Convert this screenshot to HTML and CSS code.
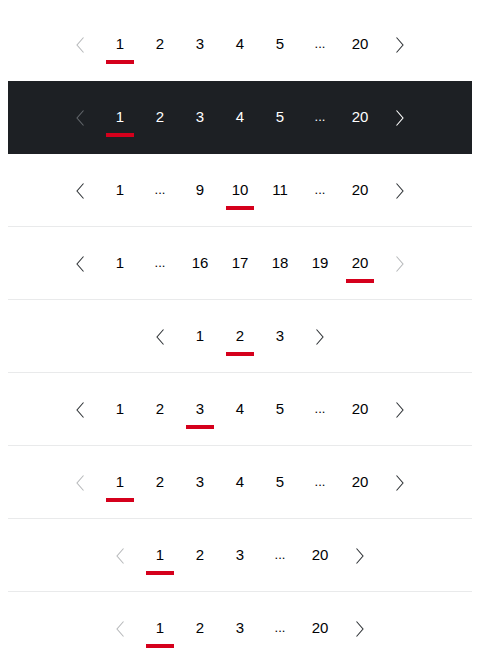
FILE: index.html
```html
<!DOCTYPE html>
<html>
<head>
<meta charset="utf-8">
<link rel="stylesheet" href="styles.css">
</head>
<body>
<div class="list">
  <nav class="pager">
    <span class="arrow disabled"><svg viewBox="0 0 8 16" width="8" height="16"><path d="M7.5 0.5 L1 8 L7.5 15.5"/></svg></span>
    <span class="item current">1</span><span class="item">2</span><span class="item">3</span><span class="item">4</span><span class="item">5</span><span class="item dots">...</span><span class="item">20</span>
    <span class="arrow"><svg viewBox="0 0 8 16" width="8" height="16"><path d="M0.5 0.5 L7 8 L0.5 15.5"/></svg></span>
  </nav>
  <nav class="pager dark">
    <span class="arrow disabled"><svg viewBox="0 0 8 16" width="8" height="16"><path d="M7.5 0.5 L1 8 L7.5 15.5"/></svg></span>
    <span class="item current">1</span><span class="item">2</span><span class="item">3</span><span class="item">4</span><span class="item">5</span><span class="item dots">...</span><span class="item">20</span>
    <span class="arrow"><svg viewBox="0 0 8 16" width="8" height="16"><path d="M0.5 0.5 L7 8 L0.5 15.5"/></svg></span>
  </nav>
  <nav class="pager">
    <span class="arrow"><svg viewBox="0 0 8 16" width="8" height="16"><path d="M7.5 0.5 L1 8 L7.5 15.5"/></svg></span>
    <span class="item">1</span><span class="item dots">...</span><span class="item">9</span><span class="item current">10</span><span class="item">11</span><span class="item dots">...</span><span class="item">20</span>
    <span class="arrow"><svg viewBox="0 0 8 16" width="8" height="16"><path d="M0.5 0.5 L7 8 L0.5 15.5"/></svg></span>
  </nav>
  <nav class="pager">
    <span class="arrow"><svg viewBox="0 0 8 16" width="8" height="16"><path d="M7.5 0.5 L1 8 L7.5 15.5"/></svg></span>
    <span class="item">1</span><span class="item dots">...</span><span class="item">16</span><span class="item">17</span><span class="item">18</span><span class="item">19</span><span class="item current">20</span>
    <span class="arrow disabled"><svg viewBox="0 0 8 16" width="8" height="16"><path d="M0.5 0.5 L7 8 L0.5 15.5"/></svg></span>
  </nav>
  <nav class="pager">
    <span class="arrow"><svg viewBox="0 0 8 16" width="8" height="16"><path d="M7.5 0.5 L1 8 L7.5 15.5"/></svg></span>
    <span class="item">1</span><span class="item current">2</span><span class="item">3</span>
    <span class="arrow"><svg viewBox="0 0 8 16" width="8" height="16"><path d="M0.5 0.5 L7 8 L0.5 15.5"/></svg></span>
  </nav>
  <nav class="pager">
    <span class="arrow"><svg viewBox="0 0 8 16" width="8" height="16"><path d="M7.5 0.5 L1 8 L7.5 15.5"/></svg></span>
    <span class="item">1</span><span class="item">2</span><span class="item current">3</span><span class="item">4</span><span class="item">5</span><span class="item dots">...</span><span class="item">20</span>
    <span class="arrow"><svg viewBox="0 0 8 16" width="8" height="16"><path d="M0.5 0.5 L7 8 L0.5 15.5"/></svg></span>
  </nav>
  <nav class="pager">
    <span class="arrow disabled"><svg viewBox="0 0 8 16" width="8" height="16"><path d="M7.5 0.5 L1 8 L7.5 15.5"/></svg></span>
    <span class="item current">1</span><span class="item">2</span><span class="item">3</span><span class="item">4</span><span class="item">5</span><span class="item dots">...</span><span class="item">20</span>
    <span class="arrow"><svg viewBox="0 0 8 16" width="8" height="16"><path d="M0.5 0.5 L7 8 L0.5 15.5"/></svg></span>
  </nav>
  <nav class="pager">
    <span class="arrow disabled"><svg viewBox="0 0 8 16" width="8" height="16"><path d="M7.5 0.5 L1 8 L7.5 15.5"/></svg></span>
    <span class="item current">1</span><span class="item">2</span><span class="item">3</span><span class="item dots">...</span><span class="item">20</span>
    <span class="arrow"><svg viewBox="0 0 8 16" width="8" height="16"><path d="M0.5 0.5 L7 8 L0.5 15.5"/></svg></span>
  </nav>
  <nav class="pager">
    <span class="arrow disabled"><svg viewBox="0 0 8 16" width="8" height="16"><path d="M7.5 0.5 L1 8 L7.5 15.5"/></svg></span>
    <span class="item current">1</span><span class="item">2</span><span class="item">3</span><span class="item dots">...</span><span class="item">20</span>
    <span class="arrow"><svg viewBox="0 0 8 16" width="8" height="16"><path d="M0.5 0.5 L7 8 L0.5 15.5"/></svg></span>
  </nav>
</div>
</body>
</html>
```
FILE: styles.css
```css
html, body {
  margin: 0;
  padding: 0;
  background: #fff;
}
body {
  padding: 8px;
  font-family: "Liberation Sans", Arial, sans-serif;
  font-size: 15px;
  color: #010205;
}
.list {
  display: flex;
  flex-direction: column;
}
.pager {
  display: flex;
  justify-content: center;
  align-items: flex-start;
  height: 72px;
  box-sizing: content-box;
  padding: 0;
  border-bottom: 1px solid #e9eaeb;
}
.pager:first-child {
  border-bottom-color: #fff;
}
.pager:last-child {
  border-bottom-color: #fff;
}
.pager.dark {
  background: #1d2024;
  color: #fff;
  border-bottom-color: #1d2024;
}
.item {
  width: 40px;
  margin-top: 24px;
  height: 32px;
  line-height: 24px;
  text-align: center;
  position: relative;
}
.item.dots {
  font-size: 13px;
}
.item.current::after {
  content: "";
  position: absolute;
  left: 6px;
  right: 6px;
  bottom: 0;
  height: 4px;
  background: #d5001c;
}
.arrow {
  width: 40px;
  height: 16px;
  margin-top: 29px;
  display: flex;
  justify-content: center;
}
.arrow svg {
  display: block;
  fill: none;
  stroke: #323639;
  stroke-width: 1.1;
}
.arrow.disabled svg {
  stroke: #b8babc;
}
.dark .arrow svg {
  stroke: #fff;
}
.dark .arrow.disabled svg {
  stroke: #62666b;
}
```
